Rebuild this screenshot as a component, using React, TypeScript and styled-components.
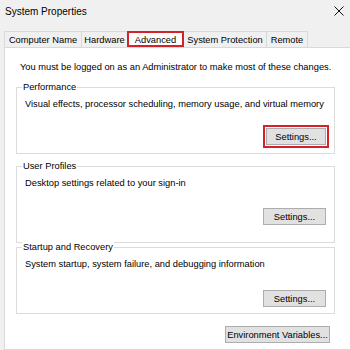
import styled, { createGlobalStyle } from "styled-components";

const GlobalStyle = createGlobalStyle`
  html, body {
    margin: 0;
    padding: 0;
    background: #f0f0f0;
  }
`;

const tabs = [
  { label: "Computer Name", width: 78 },
  { label: "Hardware", width: 47 },
  { label: "Advanced", width: 57, active: true },
  { label: "System Protection", width: 84 },
  { label: "Remote", width: 42 },
];

export default function App() {
  return (
    <>
      <GlobalStyle />
      <Window>
        <TitleBar>
          <Title>System Properties</Title>
          <CloseIcon width="10" height="10" viewBox="0 0 10 10" aria-label="close">
            <path d="M0.5 0.5 L9.5 9.5 M9.5 0.5 L0.5 9.5" stroke="#111" strokeWidth="1" />
          </CloseIcon>
        </TitleBar>

        <TabStrip>
          {tabs.map((t) => (
            <Tab key={t.label} $w={t.width} $active={!!t.active}>
              {t.label}
            </Tab>
          ))}
        </TabStrip>

        <Panel>
          <Notice>You must be logged on as an Administrator to make most of these changes.</Notice>

          <Group $top={14} $bottom={8}>
            <Legend>Performance</Legend>
            <Desc>Visual effects, processor scheduling, memory usage, and virtual memory</Desc>
            <ButtonRow $gap={18}>
              <Button $w={60} $highlight>Settings...</Button>
            </ButtonRow>
          </Group>

          <Group $top={12} $bottom={17}>
            <Legend>User Profiles</Legend>
            <Desc>Desktop settings related to your sign-in</Desc>
            <ButtonRow $gap={19}>
              <Button $w={63}>Settings...</Button>
            </ButtonRow>
          </Group>

          <Group $top={4} $bottom={6}>
            <Legend>Startup and Recovery</Legend>
            <Desc>System startup, system failure, and debugging information</Desc>
            <ButtonRow $gap={20}>
              <Button $w={63}>Settings...</Button>
            </ButtonRow>
          </Group>

          <FooterRow>
            <Button $w={105}>Environment Variables...</Button>
          </FooterRow>
        </Panel>
      </Window>
    </>
  );
}

const Window = styled.div`
  width: 350px;
  height: 350px;
  overflow: hidden;
  display: flex;
  flex-direction: column;
  background: #f0f0f0;
  color: #000;
  font-family: "Liberation Sans", Arial, sans-serif;
  font-size: 9.3px;
`;

const TitleBar = styled.div`
  display: flex;
  align-items: center;
  justify-content: space-between;
  height: 22px;
  padding: 0 5px 0 5px;
  flex-shrink: 0;
`;

const Title = styled.div`
  font-size: 10px;
  color: #000;
`;

const CloseIcon = styled.svg`
  display: block;
  margin-right: 1px;
`;

const TabStrip = styled.div`
  display: flex;
  align-items: flex-end;
  height: 16px;
  margin-top: 9px;
  padding-left: 4px;
  flex-shrink: 0;
`;

const Tab = styled.div<{ $w: number; $active: boolean }>`
  box-sizing: border-box;
  width: ${({ $w }) => $w}px;
  height: 16px;
  margin-left: -1px;
  display: flex;
  align-items: center;
  justify-content: center;
  border: 1px solid #d9d9d9;
  border-bottom: none;
  background: ${({ $active }) => ($active ? "#fff" : "#f0f0f0")};
  outline: ${({ $active }) => ($active ? "2px solid #d3222a" : "none")};
  outline-offset: -2px;
  position: relative;
  z-index: ${({ $active }) => ($active ? 1 : 0)};
  white-space: nowrap;

  &:first-child {
    margin-left: 0;
  }
`;

const Panel = styled.div`
  flex: 1;
  display: flex;
  flex-direction: column;
  margin-left: 4px;
  padding: 13px 15px 0 11px;
  background: #fff;
  border: 1px solid #d9d9d9;
  border-right: none;
`;

const Notice = styled.div`
  line-height: 12px;
  padding-left: 4px;
  white-space: nowrap;
`;

const Group = styled.div<{ $top: number; $bottom: number }>`
  display: flex;
  flex-direction: column;
  margin-top: ${({ $top }) => $top}px;
  padding: 0 8px ${({ $bottom }) => $bottom}px 8px;
  border: 1px solid #dcdcdc;
`;

const Legend = styled.div`
  align-self: flex-start;
  margin: -6px 0 0 -3px;
  padding: 0 1px;
  line-height: 11px;
  background: #fff;
`;

const Desc = styled.div`
  margin-top: 5px;
  line-height: 12px;
  white-space: nowrap;
`;

const ButtonRow = styled.div<{ $gap: number }>`
  display: flex;
  justify-content: flex-end;
  margin-top: ${({ $gap }) => $gap}px;
`;

const FooterRow = styled.div`
  display: flex;
  justify-content: flex-end;
  margin-top: 12px;
  padding-right: 5px;
`;

const Button = styled.div<{ $w: number; $highlight?: boolean }>`
  box-sizing: border-box;
  width: ${({ $w }) => $w}px;
  height: 17px;
  display: flex;
  align-items: center;
  justify-content: center;
  background: #e1e1e1;
  border: 1px solid #adadad;
  outline: ${({ $highlight }) => ($highlight ? "2px solid #d3222a" : "none")};
  outline-offset: 1px;
  white-space: nowrap;
`;
